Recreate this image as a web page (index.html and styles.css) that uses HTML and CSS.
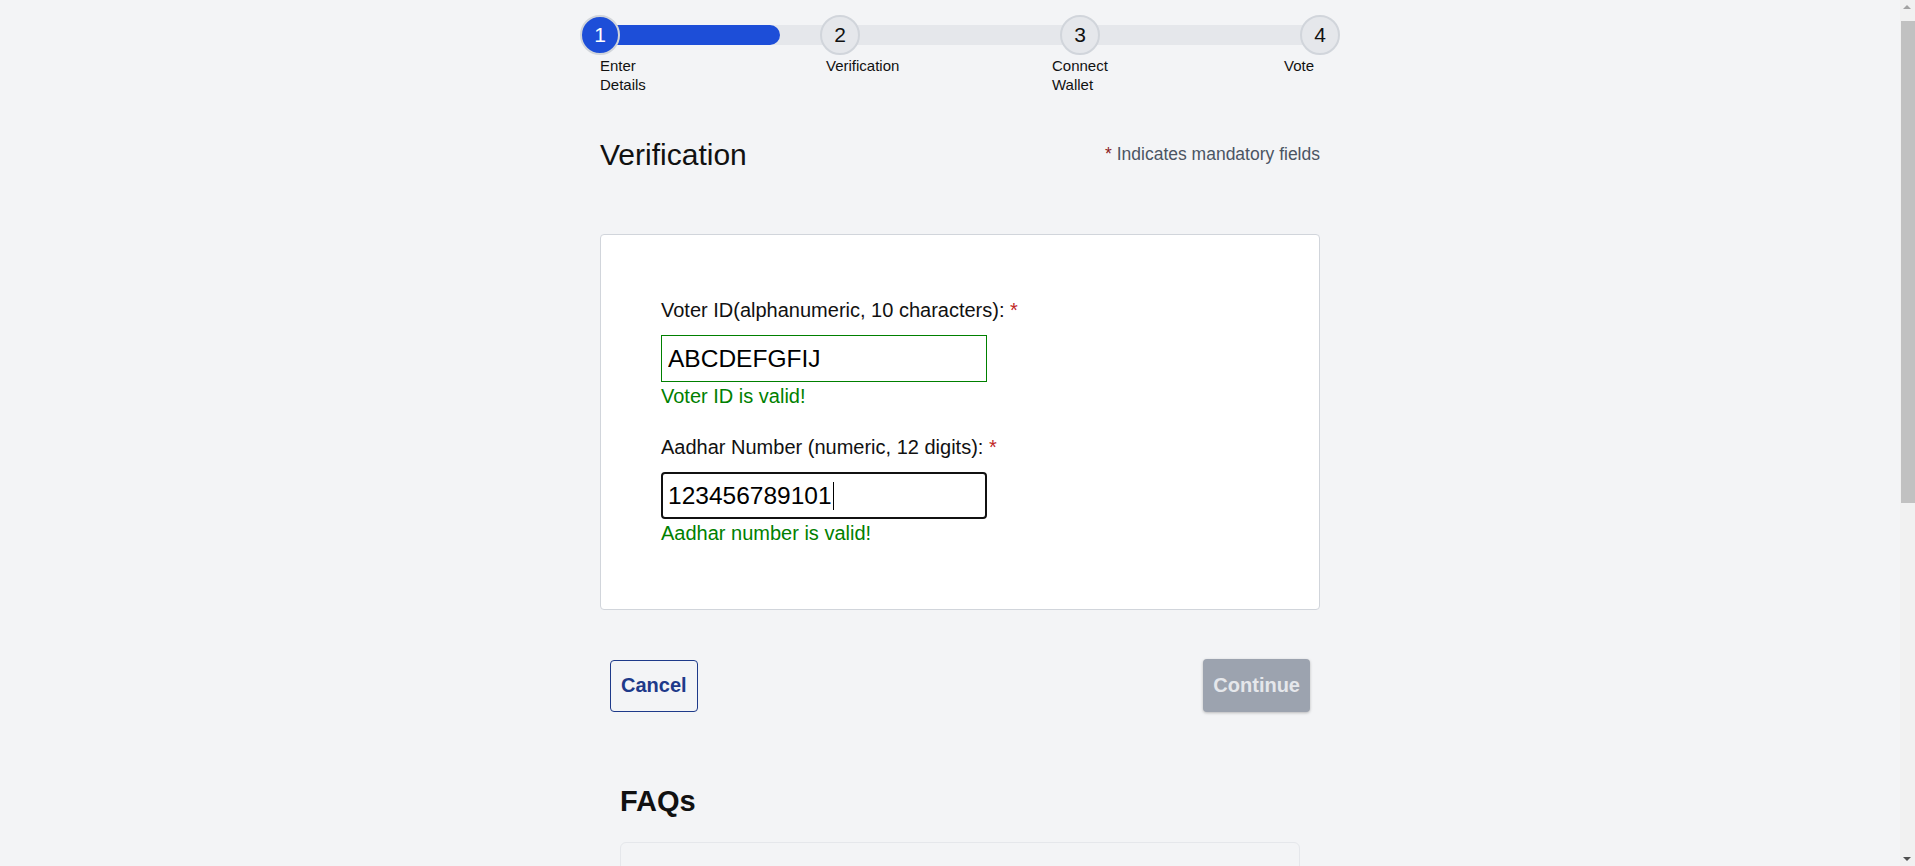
FILE: index.html
```html
<!DOCTYPE html>
<html lang="en">
<head>
<meta charset="utf-8">
<title>Verification</title>
<link rel="stylesheet" href="styles.css">
</head>
<body>
<main class="page">
  <div class="stepper">
    <div class="track">
      <div class="fill" style="width: 25%"></div>
      <div class="markers">
        <span class="dot active">1</span>
        <span class="dot">2</span>
        <span class="dot">3</span>
        <span class="dot">4</span>
      </div>
    </div>
    <div class="step-labels">
      <span class="step-label">Enter Details</span>
      <span class="step-label">Verification</span>
      <span class="step-label">Connect Wallet</span>
      <span class="step-label">Vote</span>
    </div>
  </div>

  <div class="header">
    <h1 class="title">Verification</h1>
    <p class="mandatory"><span class="req dark">*</span> Indicates mandatory fields</p>
  </div>

  <form class="card">
    <label class="field-label" for="voter">Voter ID(alphanumeric, 10 characters): <span class="req">*</span></label>
    <input class="field valid" id="voter" type="text" value="ABCDEFGFIJ">
    <p class="ok">Voter ID is valid!</p>

    <label class="field-label second" for="aadhar">Aadhar Number (numeric, 12 digits): <span class="req">*</span></label>
    <div class="field focused"><span class="value">123456789101</span><span class="caret"></span></div>
    <p class="ok">Aadhar number is valid!</p>
  </form>

  <div class="actions">
    <button class="btn cancel" type="button">Cancel</button>
    <button class="btn continue" type="button">Continue</button>
  </div>

  <section class="faq">
    <h2 class="faq-title">FAQs</h2>
    <div class="faq-box"></div>
  </section>
</main>

<div class="scrollbar" aria-hidden="true">
  <span class="arrow up"></span>
  <span class="thumb"></span>
  <span class="arrow down"></span>
</div>
</body>
</html>
```
FILE: styles.css
```css
html, body {
  margin: 0;
  padding: 0;
}
body {
  background: #f3f4f6;
  font-family: "Liberation Sans", Arial, sans-serif;
  color: #111;
  padding-left: 5px;
}
.page {
  width: 720px;
  margin: 0 auto;
  padding-bottom: 40px;
}

/* stepper */
.stepper {
  padding-top: 25px;
}
.track {
  position: relative;
  height: 20px;
  background: #e5e7eb;
  border-radius: 10px;
}
.fill {
  height: 100%;
  background: #1d4ed8;
  border-radius: 10px;
}
.markers {
  position: absolute;
  top: -10px;
  left: -20px;
  right: -20px;
  display: flex;
  justify-content: space-between;
}
.dot {
  width: 40px;
  height: 40px;
  box-sizing: border-box;
  border: 2px solid #d1d5db;
  border-radius: 50%;
  background: #e5e7eb;
  display: flex;
  align-items: center;
  justify-content: center;
  font-size: 21px;
  color: #111;
}
.dot.active {
  background: #1d4ed8;
  color: #fff;
}
.step-labels {
  margin-top: 11px;
  display: grid;
  grid-template-columns: 226px 226px 232px 1fr;
  font-size: 15px;
  line-height: 19px;
}
.step-label {
  max-width: 80px;
}

/* header */
.header {
  margin-top: 43px;
  display: flex;
  justify-content: space-between;
  align-items: center;
}
.title {
  margin: 0;
  font-size: 30px;
  font-weight: normal;
  line-height: 35px;
}
.mandatory {
  margin: 0;
  font-size: 17.5px;
  color: #4b5563;
}
.req {
  color: #c02626;
}
.req.dark {
  color: #8b1c1c;
}

/* card */
.card {
  margin-top: 62px;
  background: #fff;
  border: 1px solid #d1d5db;
  border-radius: 4px;
  padding: 64px 60px 64px;
}
.field-label {
  display: block;
  font-size: 20px;
  line-height: 23px;
  color: #111;
}
.field-label.second {
  margin-top: 28px;
}
.field {
  display: block;
  margin-top: 13px;
  width: 326px;
  height: 47px;
  box-sizing: border-box;
  padding: 0 6px;
  font-family: "Liberation Sans", Arial, sans-serif;
  font-size: 24.5px;
  color: #000;
  background: #fff;
  outline: none;
}
.field.valid {
  border: 1px solid #008000;
  border-radius: 0;
}
.field.focused {
  display: flex;
  align-items: center;
  border: 2px solid #111;
  border-radius: 4px;
  padding: 0 5px;
}
.caret {
  width: 1px;
  height: 28px;
  margin-left: 1px;
  background: #000;
}
.ok {
  margin: 3px 0 0;
  font-size: 20px;
  line-height: 23px;
  color: #008000;
}

/* actions */
.actions {
  margin-top: 49px;
  padding: 0 10px;
  display: flex;
  justify-content: space-between;
  align-items: center;
}
.btn {
  font-family: "Liberation Sans", Arial, sans-serif;
  font-size: 20px;
  font-weight: bold;
  padding: 0 10px;
  border-radius: 4px;
  cursor: pointer;
}
.cancel {
  height: 52px;
  background: transparent;
  border: 1px solid #1e3a8a;
  color: #1e3a8a;
}
.continue {
  height: 53px;
  background: #9ca3af;
  border: none;
  color: #e5e7eb;
  box-shadow: 0 1px 3px rgba(0, 0, 0, 0.25);
}

/* faq */
.faq {
  margin-top: 73px;
  padding: 0 20px;
}
.faq-title {
  margin: 0 0 25px;
  font-size: 29px;
  font-weight: bold;
  line-height: 32px;
}
.faq-box {
  min-height: 600px;
  border: 1px solid #e5e7eb;
  border-radius: 6px;
  background: #f3f4f6;
}

/* browser scrollbar look-alike */
.scrollbar {
  position: fixed;
  top: 0;
  right: 0;
  width: 15px;
  height: 100vh;
  background: #f1f1f1;
}
.thumb {
  position: absolute;
  top: 21px;
  left: 1px;
  right: 0;
  height: 482px;
  background: #c1c1c1;
}
.arrow {
  position: absolute;
  left: 3px;
  width: 0;
  height: 0;
  border-left: 4px solid transparent;
  border-right: 4px solid transparent;
}
.arrow.up {
  top: 5px;
  border-bottom: 4px solid #a3a3a3;
}
.arrow.down {
  bottom: 5px;
  border-top: 4px solid #505050;
}
```
